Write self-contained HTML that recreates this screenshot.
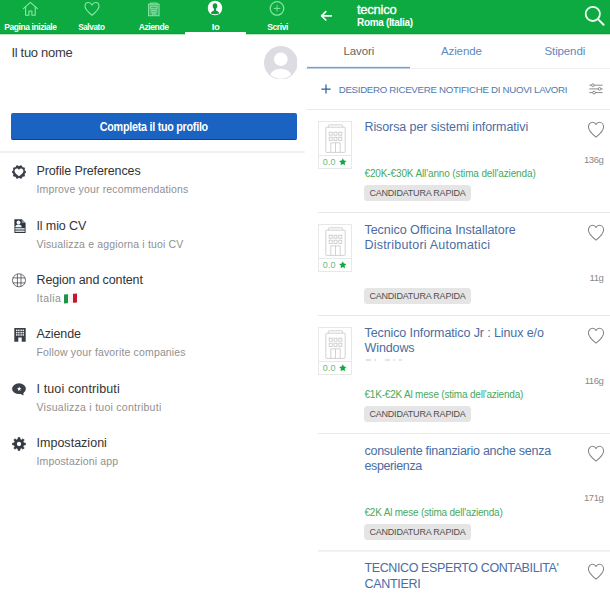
<!DOCTYPE html>
<html lang="it">
<head>
<meta charset="utf-8">
<title>Glassdoor</title>
<style>
html,body{margin:0;padding:0;background:#fff;}
body{width:610px;height:594px;position:relative;overflow:hidden;font-family:"Liberation Sans",sans-serif;color:#333;}
.a{position:absolute;white-space:nowrap;line-height:1;}
.hdr{position:absolute;top:0;height:33px;background:#0caa41;border-bottom:1px solid #0b9b3c;box-shadow:0 1px 0 #bfe8cb;}
.tab{position:absolute;top:21px;width:61px;text-align:center;color:#fff;font-weight:bold;font-size:9.5px;letter-spacing:-0.45px;line-height:12px;white-space:nowrap;}
.ico{position:absolute;}
.mt{position:absolute;left:36.5px;font-size:12.5px;color:#333;white-space:nowrap;line-height:16px;letter-spacing:-0.12px;}
.ms{position:absolute;left:36.5px;font-size:10.5px;color:#909090;white-space:nowrap;line-height:14px;letter-spacing:0.15px;}
.sep{position:absolute;height:1px;background:#e9e9e9;}
.jt{position:absolute;left:364.5px;font-size:12.5px;color:#4a6da3;line-height:15.3px;white-space:nowrap;letter-spacing:-0.1px;}
.sal{position:absolute;left:364.5px;font-size:10px;color:#45aa5e;white-space:nowrap;line-height:12px;letter-spacing:-0.13px;}
.bdg{position:absolute;left:364px;width:107px;height:16px;border-radius:3.5px;background:#e5e5e5;color:#505050;font-size:9px;line-height:16.6px;text-align:center;white-space:nowrap;letter-spacing:-0.2px;}
.age{position:absolute;right:6.5px;font-size:9.5px;color:#8a8a8a;line-height:12px;white-space:nowrap;letter-spacing:-0.4px;}
.logo{position:absolute;left:318px;width:32px;height:46px;border:1px solid #e8e8e8;background:#fff;}
.logo .rt{position:absolute;left:0;right:0;top:33px;height:13px;border-top:1px solid #e8e8e8;}
.logo .rn{position:absolute;left:3.8px;top:-0.8px;font-size:9px;line-height:14px;color:#6cb883;letter-spacing:0.15px;}
.rtab{position:absolute;top:44px;font-size:11.5px;line-height:14px;color:#6089c0;white-space:nowrap;letter-spacing:-0.12px;}
</style>
</head>
<body>

<!-- ================= LEFT PANEL ================= -->
<div class="hdr" style="left:0;width:305px;"></div>
<div class="hdr" style="left:305px;width:305px;"></div>

<!-- nav icons -->
<svg class="ico" style="left:22px;top:1px" width="17" height="16" viewBox="0 0 17 16" fill="none" stroke="#8be6a8" stroke-width="1.1" stroke-linejoin="round" stroke-linecap="round">
  <path d="M1.4 7.6 L8.4 1.4 L15.4 7.6"/><path d="M3.6 6 V14.3 H6.9 V10 H9.9 V14.3 H13.2 V6"/>
</svg>
<svg class="ico" style="left:83px;top:1px" width="18" height="16" viewBox="0 0 18 16" fill="none" stroke="#8be6a8" stroke-width="1.15" stroke-linejoin="round">
  <path d="M9 14.2 C4.8 10.9 2 8.3 2 5.3 C2 3 3.6 1.5 5.4 1.5 C6.9 1.5 8.2 2.4 9 3.9 C9.8 2.4 11.1 1.5 12.6 1.5 C14.4 1.5 16 3 16 5.3 C16 8.3 13.2 10.9 9 14.2 Z"/>
</svg>
<svg class="ico" style="left:147px;top:2px" width="13" height="15" viewBox="0 0 13 15" fill="none" stroke="#8be6a8" stroke-width="0.9">
  <path d="M3.2 2.2 V1.1 H10.4 V2.2" stroke-width="1"/><rect x="1.5" y="2.2" width="10.6" height="11.6" fill="rgba(255,255,255,0.2)"/>
  <rect x="3.6" y="4.2" width="6.4" height="2.6"/><path d="M3.6 8.6 H10 M3.6 10.3 H10"/><path d="M5.4 13.8 V11.8 H8.2 V13.8"/>
</svg>
<svg class="ico" style="left:207.1px;top:0.1px" width="16" height="16" viewBox="-8 -8 16 16">
  <circle cx="0" cy="0" r="7.25" fill="#fff"/>
  <g fill="#0d9a40"><ellipse cx="0" cy="-2" rx="2.3" ry="2.8"/><rect x="-1.1" y="-0.4" width="2.2" height="3.4"/>
  <path d="M-4.1 5.6 C-4.1 3.6 -2.4 2.9 0 2.3 C2.4 2.9 4.1 3.6 4.1 5.6 C2.8 6 1.4 6.2 0 6.2 C-1.4 6.2 -2.8 6 -4.1 5.6 Z"/></g>
</svg>
<svg class="ico" style="left:268.7px;top:1.4px" width="16" height="16" viewBox="0 0 16 16" fill="none" stroke="#7fe49f">
  <circle cx="8" cy="7.4" r="6.75" stroke-width="1.3"/><path d="M8 4.3 V10.5 M4.7 7.4 H11.3" stroke-width="1"/>
</svg>

<div class="tab" style="left:-0.3px;"><span style="display:inline-block;transform:scaleX(0.89)">Pagina iniziale</span></div>
<div class="tab" style="left:61.2px"><span style="display:inline-block;transform:scaleX(0.86)">Salvato</span></div>
<div class="tab" style="left:123.5px"><span style="display:inline-block;transform:scaleX(0.9)">Aziende</span></div>
<div class="tab" style="left:185px">Io</div>
<div class="tab" style="left:246.6px"><span style="display:inline-block;transform:scaleX(0.9)">Scrivi</span></div>
<div class="a" style="left:184.5px;top:32px;width:61.5px;height:3px;background:#fff;"></div>

<!-- profile -->
<div class="a" style="left:11.4px;top:45.3px;font-size:13px;line-height:16px;color:#3a3a3a;letter-spacing:-0.3px;">Il tuo nome</div>
<svg class="ico" style="left:263.5px;top:45.6px" width="33.6" height="33.6" viewBox="0 0 34 34">
  <defs><clipPath id="avc"><circle cx="17" cy="17" r="16.2"/></clipPath></defs>
  <circle cx="17" cy="17" r="17" fill="#dcdce2"/>
  <g clip-path="url(#avc)" fill="#fff">
    <circle cx="17" cy="13.4" r="6.9"/>
    <ellipse cx="17" cy="29.6" rx="10.4" ry="6.6"/>
  </g>
</svg>
<div class="a" style="left:11px;top:113px;width:285.5px;height:26px;border-radius:2px;background:#1a63c2;border-bottom:1px solid #0f3f97;color:#fff;font-weight:bold;font-size:12.5px;line-height:29.4px;text-align:center;"><span style="display:inline-block;transform:scaleX(0.86);transform-origin:50% 50%;letter-spacing:-0.3px;">Completa il tuo profilo</span></div>
<div class="a" style="left:0;top:151px;width:305px;height:2px;background:#f1f1f1;"></div>


<!-- menu icons -->
<svg class="ico" style="left:11.1px;top:164.1px" width="16" height="16" viewBox="0 0 16 16">
  <path d="M15.10 8.00 L14.98 8.44 L14.67 8.84 L14.27 9.20 L13.91 9.52 L13.71 9.85 L13.68 10.25 L13.77 10.72 L13.89 11.24 L13.91 11.75 L13.74 12.17 L13.39 12.46 L12.90 12.60 L12.37 12.65 L11.89 12.70 L11.53 12.85 L11.27 13.15 L11.07 13.59 L10.86 14.08 L10.58 14.50 L10.19 14.75 L9.74 14.78 L9.26 14.60 L8.80 14.33 L8.38 14.09 L8.00 14.00 L7.62 14.09 L7.20 14.33 L6.74 14.60 L6.26 14.78 L5.81 14.75 L5.42 14.50 L5.14 14.08 L4.93 13.59 L4.73 13.15 L4.47 12.85 L4.11 12.70 L3.63 12.65 L3.10 12.60 L2.61 12.46 L2.26 12.17 L2.09 11.75 L2.11 11.24 L2.23 10.72 L2.32 10.25 L2.29 9.85 L2.09 9.52 L1.73 9.20 L1.33 8.84 L1.02 8.44 L0.90 8.00 L1.02 7.56 L1.33 7.16 L1.73 6.80 L2.09 6.48 L2.29 6.15 L2.32 5.75 L2.23 5.28 L2.11 4.76 L2.09 4.25 L2.26 3.83 L2.61 3.54 L3.10 3.40 L3.63 3.35 L4.11 3.30 L4.47 3.15 L4.73 2.85 L4.93 2.41 L5.14 1.92 L5.42 1.50 L5.81 1.25 L6.26 1.22 L6.74 1.40 L7.20 1.67 L7.62 1.91 L8.00 2.00 L8.38 1.91 L8.80 1.67 L9.26 1.40 L9.74 1.22 L10.19 1.25 L10.58 1.50 L10.86 1.92 L11.07 2.41 L11.27 2.85 L11.53 3.15 L11.89 3.30 L12.37 3.35 L12.90 3.40 L13.39 3.54 L13.74 3.83 L13.91 4.25 L13.89 4.76 L13.77 5.28 L13.68 5.75 L13.71 6.15 L13.91 6.48 L14.27 6.80 L14.67 7.16 L14.98 7.56 L15.10 8.00Z" fill="#3a3f4a"/>
  <path d="M8 12.2 C5.2 10.1 3.6 8.7 3.6 6.9 C3.6 5.6 4.6 4.6 5.8 4.6 C6.7 4.6 7.5 5.1 8 6 C8.5 5.1 9.3 4.6 10.2 4.6 C11.4 4.6 12.4 5.6 12.4 6.9 C12.4 8.7 10.8 10.1 8 12.2 Z" fill="#fff"/>
</svg>
<svg class="ico" style="left:13.6px;top:218.9px" width="12" height="14.2" viewBox="0 0 12 14.2">
  <path d="M0.4 0.3 H7.8 L11.6 4.1 V14 H0.4 Z" fill="#2f3640"/>
  <path d="M7.8 0.3 V4.1 H11.6 Z" fill="#8a9199"/>
  <circle cx="4.5" cy="3.5" r="2" fill="#eef4f5"/>
  <path d="M1.3 8.3 C1.3 6.3 2.5 5.4 4.5 5.4 C6.5 5.4 7.7 6.3 7.7 8.3 Z" fill="#eef4f5"/>
  <rect x="1.3" y="9.1" width="9.4" height="1.5" fill="#d5dde1"/>
  <rect x="1.3" y="11.5" width="9.4" height="1.5" fill="#d5dde1"/>
</svg>
<svg class="ico" style="left:12.1px;top:273.1px" width="14" height="14.6" viewBox="0 0 14 14.6" fill="none" stroke="#4a4d52" stroke-width="0.8">
  <circle cx="7" cy="7.3" r="6.5"/>
  <path d="M5.4 1 V13.6 M9 1.1 V13.5 M0.9 4.9 H13.1 M0.9 9.9 H13.1"/>
</svg>
<svg class="ico" style="left:13.5px;top:328px" width="12" height="14" viewBox="0 0 12 14">
  <path d="M0.3 0 H11.7 V13.8 H7.7 V9.4 H4.3 V13.8 H0.3 Z" fill="#3a3f47"/>
  <g fill="#e9edf0">
    <rect x="2" y="1.6" width="1.5" height="1.5"/><rect x="4.1" y="1.6" width="1.5" height="1.5"/><rect x="6.4" y="1.6" width="1.5" height="1.5"/><rect x="8.5" y="1.6" width="1.5" height="1.5"/>
    <rect x="2" y="3.9" width="1.5" height="1.5"/><rect x="4.1" y="3.9" width="1.5" height="1.5"/><rect x="6.4" y="3.9" width="1.5" height="1.5"/><rect x="8.5" y="3.9" width="1.5" height="1.5"/>
    <rect x="2" y="6.2" width="1.5" height="1.5"/><rect x="4.1" y="6.2" width="1.5" height="1.5"/><rect x="6.4" y="6.2" width="1.5" height="1.5"/><rect x="8.5" y="6.2" width="1.5" height="1.5"/>
  </g>
</svg>
<svg class="ico" style="left:12px;top:383px" width="14.4" height="13" viewBox="0 0 14.4 13">
  <ellipse cx="7" cy="5.7" rx="6.9" ry="5.4" fill="#3a3f49"/>
  <path d="M7.5 10.4 L11.5 12.6 L11.3 8.6 Z" fill="#3a3f49"/>
  <path d="M7.2 3.6 L7.8 5.1 L9.4 5.25 L8.15 6.3 L8.55 7.9 L7.2 7.0 L5.85 7.9 L6.25 6.3 L5 5.25 L6.6 5.1 Z" fill="#fff"/>
</svg>
<svg class="ico" style="left:12.3px;top:436.5px" width="14" height="14" viewBox="0 0 14 14">
  <path d="M11.80 6.03 L13.54 6.14 L13.54 7.86 L11.80 7.97 L11.08 9.71 L12.23 11.02 L11.02 12.23 L9.71 11.08 L7.97 11.80 L7.86 13.54 L6.14 13.54 L6.03 11.80 L4.29 11.08 L2.98 12.23 L1.77 11.02 L2.92 9.71 L2.20 7.97 L0.46 7.86 L0.46 6.14 L2.20 6.03 L2.92 4.29 L1.77 2.98 L2.98 1.77 L4.29 2.92 L6.03 2.20 L6.14 0.46 L7.86 0.46 L7.97 2.20 L9.71 2.92 L11.02 1.77 L12.23 2.98 L11.08 4.29Z" fill="#333942" stroke="#333942" stroke-width="0.7" stroke-linejoin="round"/>
  <circle cx="7" cy="7" r="2.15" fill="#fff"/>
</svg>

<!-- menu -->
<div class="mt" style="top:163px">Profile Preferences</div>
<div class="ms" style="top:182px">Improve your recommendations</div>
<div class="mt" style="top:218px">Il mio CV</div>
<div class="ms" style="top:237px">Visualizza e aggiorna i tuoi CV</div>
<div class="mt" style="top:272px">Region and content</div>
<div class="ms" style="top:291px;letter-spacing:0.45px">Italia</div>
<div class="a" style="left:64px;top:294px;width:13px;height:9px;transform:skewY(-5deg);background:linear-gradient(90deg,#1d9448 0 34%,#f4f4f4 34% 66%,#c8142d 66%);"></div>
<div class="mt" style="top:326px">Aziende</div>
<div class="ms" style="top:345px">Follow your favorite companies</div>
<div class="mt" style="top:381px;letter-spacing:0.12px">I tuoi contributi</div>
<div class="ms" style="top:400px;letter-spacing:0.26px">Visualizza i tuoi contributi</div>
<div class="mt" style="top:435px;letter-spacing:0.02px">Impostazioni</div>
<div class="ms" style="top:454px">Impostazioni app</div>


<!-- ================= RIGHT PANEL ================= -->
<svg class="ico" style="left:320px;top:10px" width="13" height="12" viewBox="0 0 13 12" fill="none" stroke="#fff" stroke-width="1.7" stroke-linecap="round" stroke-linejoin="round">
  <path d="M11.3 5.8 H1.8 M5.8 1.6 L1.6 5.8 L5.8 10"/>
</svg>
<div class="a" style="left:357px;top:2px;font-size:13px;line-height:15px;color:#fff;letter-spacing:-0.25px;-webkit-text-stroke:0.35px #fff;">tecnico</div>
<div class="a" style="left:357px;top:16.6px;font-size:10px;line-height:12px;color:#fff;font-weight:bold;letter-spacing:-0.33px;">Roma (Italia)</div>
<svg class="ico" style="left:583px;top:4px" width="24" height="24" viewBox="583 4 24 24" fill="none" stroke="#f0fff4" stroke-width="1.8" stroke-linecap="round">
  <circle cx="592.8" cy="13.9" r="7.1"/><path d="M598 19.1 L603.6 24.7" stroke-width="2"/>
</svg>

<div class="rtab" style="left:343.5px;color:#666;">Lavori</div>
<div class="rtab" style="left:441px;">Aziende</div>
<div class="rtab" style="left:544.5px;">Stipendi</div>
<div class="sep" style="left:305px;top:68px;width:305px;background:#efefef;"></div>
<div class="a" style="left:307px;top:66px;width:102.5px;height:3px;background:linear-gradient(#e9eff6 0 1px,#7f9fc6 1px 2px,#bccde2 2px 3px);"></div>

<svg class="ico" style="left:321.4px;top:84.3px" width="10" height="10" viewBox="0 0 10 10" fill="none" stroke="#2f5f96" stroke-width="1.25">
  <path d="M5 0.4 V9.6 M0.4 5 H9.6"/>
</svg>
<div class="a" style="left:338.7px;top:83.8px;font-size:9.7px;line-height:12px;color:#4f78ac;letter-spacing:-0.29px;">DESIDERO RICEVERE NOTIFICHE DI NUOVI LAVORI</div>
<svg class="ico" style="left:589px;top:83.4px" width="14" height="12" viewBox="0 0 14 12" fill="none" stroke="#777" stroke-width="0.85">
  <path d="M0.3 2.2 H13.6 M0.3 5.9 H13.6 M0.3 9.6 H13.6"/>
  <circle cx="3.9" cy="2.2" r="1.35" fill="#fff"/><circle cx="10.6" cy="5.9" r="1.35" fill="#fff"/><circle cx="5.1" cy="9.6" r="1.35" fill="#fff"/>
</svg>
<div class="sep" style="left:307px;top:109px;width:303px;"></div>

<!-- jobs -->
<div class="logo" style="top:121px"><svg style="position:absolute;left:6px;top:2px" width="21" height="30" viewBox="0 0 21 30" fill="none" stroke="#c6c6c6" stroke-width="0.8">
  <path d="M3.4 3.2 V1.8 Q3.4 0.8 4.4 0.8 H16.6 Q17.6 0.8 17.6 1.8 V3.2"/><rect x="0.8" y="3.2" width="19.4" height="25.2" rx="0.8"/>
  <rect x="4.2" y="8.2" width="3" height="3"/><rect x="9" y="8.2" width="3" height="3"/><rect x="13.8" y="8.2" width="3" height="3"/>
  <rect x="4.2" y="13.2" width="3" height="3.2"/><rect x="9" y="13.2" width="3" height="3.2"/><rect x="13.8" y="13.2" width="3" height="3.2"/>
  <path d="M5.8 28.4 V18.8 H15.2 V28.4 M10.5 18.8 V28.4"/>
</svg><div class="rt"><span class="rn">0.0</span><svg style="position:absolute;left:20.4px;top:2.3px" width="7.6" height="7.6" viewBox="0 0 10 10"><path d="M5 0.3 L6.45 3.4 L9.8 3.8 L7.35 6.1 L8 9.5 L5 7.8 L2 9.5 L2.65 6.1 L0.2 3.8 L3.55 3.4 Z" fill="#0caa41"/></svg></div></div>
<div class="jt" style="top:119.6px"><span style="letter-spacing:-0.1px">Risorsa per sistemi informativi</span></div>
<svg class="ico" style="left:586.7px;top:121.4px" width="18" height="17.4" viewBox="0 0 18 17.4" fill="none" stroke="#858585" stroke-width="1.05" stroke-linejoin="round">
  <path d="M9 16.2 C4.6 12.6 1.4 9.6 1.4 6 C1.4 3.2 3.3 1.2 5.6 1.2 C7.1 1.2 8.4 2.1 9 3.5 C9.6 2.1 10.9 1.2 12.4 1.2 C14.7 1.2 16.6 3.2 16.6 6 C16.6 9.6 13.4 12.6 9 16.2 Z"/>
</svg>
<div class="age" style="top:153.5px">136g</div>
<div class="sal" style="top:168.1px;letter-spacing:-0.13px">&euro;20K-&euro;30K All'anno (stima dell'azienda)</div>
<div class="bdg" style="top:185px">CANDIDATURA RAPIDA</div>
<div class="sep" style="left:318px;top:212px;width:292px;"></div>
<div class="logo" style="top:224px"><svg style="position:absolute;left:6px;top:2px" width="21" height="30" viewBox="0 0 21 30" fill="none" stroke="#c6c6c6" stroke-width="0.8">
  <path d="M3.4 3.2 V1.8 Q3.4 0.8 4.4 0.8 H16.6 Q17.6 0.8 17.6 1.8 V3.2"/><rect x="0.8" y="3.2" width="19.4" height="25.2" rx="0.8"/>
  <rect x="4.2" y="8.2" width="3" height="3"/><rect x="9" y="8.2" width="3" height="3"/><rect x="13.8" y="8.2" width="3" height="3"/>
  <rect x="4.2" y="13.2" width="3" height="3.2"/><rect x="9" y="13.2" width="3" height="3.2"/><rect x="13.8" y="13.2" width="3" height="3.2"/>
  <path d="M5.8 28.4 V18.8 H15.2 V28.4 M10.5 18.8 V28.4"/>
</svg><div class="rt"><span class="rn">0.0</span><svg style="position:absolute;left:20.4px;top:2.3px" width="7.6" height="7.6" viewBox="0 0 10 10"><path d="M5 0.3 L6.45 3.4 L9.8 3.8 L7.35 6.1 L8 9.5 L5 7.8 L2 9.5 L2.65 6.1 L0.2 3.8 L3.55 3.4 Z" fill="#0caa41"/></svg></div></div>
<div class="jt" style="top:222.8px"><span style="letter-spacing:-0.05px">Tecnico Officina Installatore</span><br><span style="letter-spacing:0.21px">Distributori Automatici</span></div>
<svg class="ico" style="left:586.7px;top:224.1px" width="18" height="17.4" viewBox="0 0 18 17.4" fill="none" stroke="#858585" stroke-width="1.05" stroke-linejoin="round">
  <path d="M9 16.2 C4.6 12.6 1.4 9.6 1.4 6 C1.4 3.2 3.3 1.2 5.6 1.2 C7.1 1.2 8.4 2.1 9 3.5 C9.6 2.1 10.9 1.2 12.4 1.2 C14.7 1.2 16.6 3.2 16.6 6 C16.6 9.6 13.4 12.6 9 16.2 Z"/>
</svg>
<div class="age" style="top:271.5px">11g</div>
<div class="bdg" style="top:288px">CANDIDATURA RAPIDA</div>
<div class="sep" style="left:318px;top:315px;width:292px;"></div>
<div class="logo" style="top:327px"><svg style="position:absolute;left:6px;top:2px" width="21" height="30" viewBox="0 0 21 30" fill="none" stroke="#c6c6c6" stroke-width="0.8">
  <path d="M3.4 3.2 V1.8 Q3.4 0.8 4.4 0.8 H16.6 Q17.6 0.8 17.6 1.8 V3.2"/><rect x="0.8" y="3.2" width="19.4" height="25.2" rx="0.8"/>
  <rect x="4.2" y="8.2" width="3" height="3"/><rect x="9" y="8.2" width="3" height="3"/><rect x="13.8" y="8.2" width="3" height="3"/>
  <rect x="4.2" y="13.2" width="3" height="3.2"/><rect x="9" y="13.2" width="3" height="3.2"/><rect x="13.8" y="13.2" width="3" height="3.2"/>
  <path d="M5.8 28.4 V18.8 H15.2 V28.4 M10.5 18.8 V28.4"/>
</svg><div class="rt"><span class="rn">0.0</span><svg style="position:absolute;left:20.4px;top:2.3px" width="7.6" height="7.6" viewBox="0 0 10 10"><path d="M5 0.3 L6.45 3.4 L9.8 3.8 L7.35 6.1 L8 9.5 L5 7.8 L2 9.5 L2.65 6.1 L0.2 3.8 L3.55 3.4 Z" fill="#0caa41"/></svg></div></div>
<div class="jt" style="top:325.7px"><span style="letter-spacing:-0.1px">Tecnico Informatico Jr : Linux e/o</span><br><span style="letter-spacing:-0.1px">Windows</span></div>
<svg class="ico" style="left:586.7px;top:326.8px" width="18" height="17.4" viewBox="0 0 18 17.4" fill="none" stroke="#858585" stroke-width="1.05" stroke-linejoin="round">
  <path d="M9 16.2 C4.6 12.6 1.4 9.6 1.4 6 C1.4 3.2 3.3 1.2 5.6 1.2 C7.1 1.2 8.4 2.1 9 3.5 C9.6 2.1 10.9 1.2 12.4 1.2 C14.7 1.2 16.6 3.2 16.6 6 C16.6 9.6 13.4 12.6 9 16.2 Z"/>
</svg>
<div class="a" style="left:366px;top:359px;width:42px;height:2px;opacity:0.55;background:linear-gradient(90deg,#c9c9c9 0 5px,transparent 5px 8px,#d4d4d4 8px 10px,transparent 10px 19px,#cfcfcf 19px 24px,transparent 24px 27px,#d4d4d4 27px 29px,transparent 29px 33px,#cfcfcf 33px 36px,transparent 36px);"></div>
<div class="age" style="top:374.5px">116g</div>
<div class="sal" style="top:388.8px;letter-spacing:-0.2px">&euro;1K-&euro;2K Al mese (stima dell'azienda)</div>
<div class="bdg" style="top:405.6px">CANDIDATURA RAPIDA</div>
<div class="sep" style="left:318px;top:433px;width:292px;"></div>
<div class="jt" style="top:443.7px"><span style="letter-spacing:-0.26px">consulente finanziario anche senza</span><br><span style="letter-spacing:-0.38px">esperienza</span></div>
<svg class="ico" style="left:586.7px;top:445.4px" width="18" height="17.4" viewBox="0 0 18 17.4" fill="none" stroke="#858585" stroke-width="1.05" stroke-linejoin="round">
  <path d="M9 16.2 C4.6 12.6 1.4 9.6 1.4 6 C1.4 3.2 3.3 1.2 5.6 1.2 C7.1 1.2 8.4 2.1 9 3.5 C9.6 2.1 10.9 1.2 12.4 1.2 C14.7 1.2 16.6 3.2 16.6 6 C16.6 9.6 13.4 12.6 9 16.2 Z"/>
</svg>
<div class="age" style="top:492.4px">171g</div>
<div class="sal" style="top:506.8px;letter-spacing:-0.21px">&euro;2K Al mese (stima dell'azienda)</div>
<div class="bdg" style="top:523.8px">CANDIDATURA RAPIDA</div>
<div class="a" style="left:318px;top:550px;width:292px;height:2px;background:linear-gradient(#efefef 0 1px,#f3f3f3 1px 2px);"></div>
<div class="jt" style="top:561.3px"><span style="letter-spacing:-0.39px">TECNICO ESPERTO CONTABILITA'</span><br><span style="letter-spacing:-0.3px">CANTIERI</span></div>
<svg class="ico" style="left:586.7px;top:563.1px" width="18" height="17.4" viewBox="0 0 18 17.4" fill="none" stroke="#858585" stroke-width="1.05" stroke-linejoin="round">
  <path d="M9 16.2 C4.6 12.6 1.4 9.6 1.4 6 C1.4 3.2 3.3 1.2 5.6 1.2 C7.1 1.2 8.4 2.1 9 3.5 C9.6 2.1 10.9 1.2 12.4 1.2 C14.7 1.2 16.6 3.2 16.6 6 C16.6 9.6 13.4 12.6 9 16.2 Z"/>
</svg>
<!-- /jobs -->

</body>
</html>
